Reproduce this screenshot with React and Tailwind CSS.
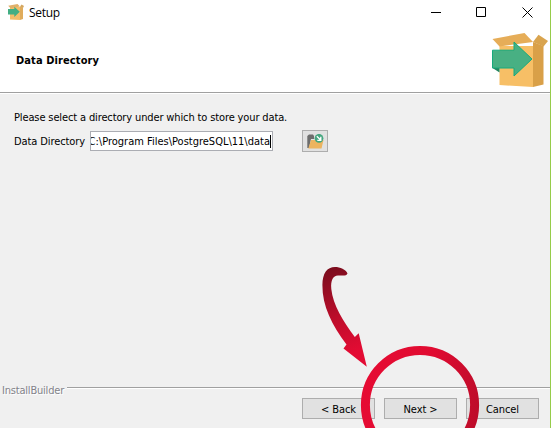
import React from "react";

function BoxIcon({ className }) {
  return (
    <svg className={className} viewBox="0 0 56 55" fill="none">
      <path d="M7.5 13H41V54L7.5 52Z" fill="#f7bf66" />
      <path d="M41 9L51.5 13V51.5L41 54Z" fill="#d9a048" />
      <path d="M0.5 6L32.5 0L41 9L7.5 13.5Z" fill="#e6ad58" />
      <path d="M41 9L46.5 1.7L56 8L51.5 13.5Z" fill="#d9a44e" />
      <path d="M0.5 35H7.5V39.5Z" fill="#23855f" />
      <path d="M0.5 17.2H22V9L40 26L22 43V35H0.5Z" fill="#48b083" stroke="#16aa7d" strokeWidth="1" />
    </svg>
  );
}

function SmallBoxIcon() {
  return (
    <svg className="h-4 w-4" viewBox="0 0 16 16" fill="none">
      <path d="M2 3H12V16L2 15.6Z" fill="#f3bd6a" />
      <path d="M12 2.5L15 3.5V15L12 16Z" fill="#e0ac5c" />
      <path d="M0.2 1.8L9.5 0L12 2.5L2.5 4.2Z" fill="#e0b06a" />
      <path d="M12 2.5L13.6 0.4L16 2L15 4Z" fill="#d4a760" />
      <path d="M0 5H6.3V2.8L11.8 7.8L6.3 13V10.5H0Z" fill="#42ae83" />
    </svg>
  );
}

function FolderIcon() {
  return (
    <svg className="h-[15px] w-[17px]" viewBox="0 0 17 15">
      <path d="M0.3 14V2L2 0.5H6L7 2V5H4L2 14Z" fill="#6d6d6d" />
      <path d="M4 6H16.5L14.5 14.5H1.3Z" fill="#ecb45f" />
      <circle cx="12" cy="4.3" r="4.4" fill="#45a67f" />
      <path d="M9.8 2.2L13.4 5.8M13.8 2.8V6.3H10.3" stroke="#fff" strokeWidth="1.3" fill="none" />
    </svg>
  );
}

function Button({ children }) {
  return (
    <button className="flex h-[21px] w-[73px] items-center justify-center border border-[#adadad] bg-[#e1e1e1] text-black">
      <span className="relative top-px tracking-[-0.1px]">{children}</span>
    </button>
  );
}

function Annotation() {
  return (
    <svg className="pointer-events-none absolute inset-0 h-[428px] w-[551px]" viewBox="0 0 551 428">
      <defs>
        <linearGradient id="tail" gradientUnits="userSpaceOnUse" x1="328" y1="266" x2="362" y2="366">
          <stop offset="0" stopColor="#780d1d" />
          <stop offset="0.5" stopColor="#be0d2b" />
          <stop offset="0.85" stopColor="#e30b33" />
        </linearGradient>
        <linearGradient id="ring" gradientUnits="userSpaceOnUse" x1="361" y1="390" x2="479" y2="410">
          <stop offset="0" stopColor="#e60b33" />
          <stop offset="0.55" stopColor="#e00b31" />
          <stop offset="1" stopColor="#bd0c2a" />
        </linearGradient>
      </defs>
      <path
        d="M347.5 273.5C346 269.5 340 267 335 267C327 267.2 322.6 273 322.4 285C322.2 306 332 325 346.5 344.5L343.5 348.5L366.8 366.8L358.7 333.3L354.8 337C343 321 333 305 331.3 289C330.6 280 333 276 338 275.5C342 275.3 346.5 276.5 347.5 273.5Z"
        fill="url(#tail)"
      />
      <circle cx="420" cy="405" r="54.6" fill="none" stroke="url(#ring)" strokeWidth="9" />
    </svg>
  );
}

export default function App() {
  return (
    <div className="relative flex h-[428px] w-[551px] flex-col overflow-hidden border-r border-[#96cc4a] bg-[#f0f0f0] font-['DejaVu_Sans_Condensed','DejaVu_Sans',sans-serif] text-[11px] leading-[14px] text-black">
      <header className="flex h-[93px] shrink-0 flex-col border-b border-[#a0a0a0] bg-white">
        <div className="flex h-[25px] items-start pl-2">
          <div className="mt-1">
            <SmallBoxIcon />
          </div>
          <span className="ml-[5px] mt-[6px] font-['Open_Sans',sans-serif] text-[12px] tracking-[-0.3px]">Setup</span>
          <svg className="ml-auto mr-[17px] mt-[7px] h-[11px] w-[102px]" viewBox="0 0 102 11" fill="none" stroke="#000">
            <path d="M0 5.5H10M45.5 0.5H54.5V9.5H45.5ZM91.5 0.5L101.5 10.5M101.5 0.5L91.5 10.5" />
          </svg>
        </div>
        <div className="flex flex-1 justify-between">
          <h1 className="ml-4 mt-[29px] font-bold tracking-[0.1px]">Data Directory</h1>
          <BoxIcon className="mr-[2px] mt-[8px] h-[55px] w-[56px]" />
        </div>
      </header>
      <main className="flex h-[291px] shrink-0 flex-col border-t border-white px-[14px] pt-[17px]">
        <p className="whitespace-nowrap tracking-[-0.13px]">Please select a directory under which to store your data.</p>
        <div className="mt-[5px] flex h-[22px] items-center">
          <label className="w-[76px] whitespace-nowrap pt-px tracking-[-0.1px]">Data Directory</label>
          <div className="flex h-5 w-[183px] items-center justify-end overflow-hidden border border-[#abadb3] bg-white pr-px">
            <span className="whitespace-nowrap pt-px">C:\Program Files\PostgreSQL\11\data</span>
            <span className="h-[13px] w-px shrink-0 bg-black" />
          </div>
          <button className="ml-[29px] flex h-[22px] w-[26px] items-center justify-center border border-[#adadad] bg-[#e1e1e1]">
            <FolderIcon />
          </button>
        </div>
      </main>
      <footer className="flex flex-1 flex-col">
        <div className="flex h-[13px] items-start pl-[2px]">
          <span className="w-[65px] whitespace-nowrap tracking-[-0.2px] text-[#83838a] [text-shadow:1px_1px_0_#fff]">InstallBuilder</span>
          <div className="mt-[3px] h-[2px] flex-1 border-b border-t border-b-white border-t-[#a0a0a0]" />
        </div>
        <div className="mt-px flex justify-end gap-[9px] pr-[11px]">
          <Button>&lt; Back</Button>
          <Button>Next &gt;</Button>
          <Button>Cancel</Button>
        </div>
      </footer>
      <Annotation />
    </div>
  );
}
